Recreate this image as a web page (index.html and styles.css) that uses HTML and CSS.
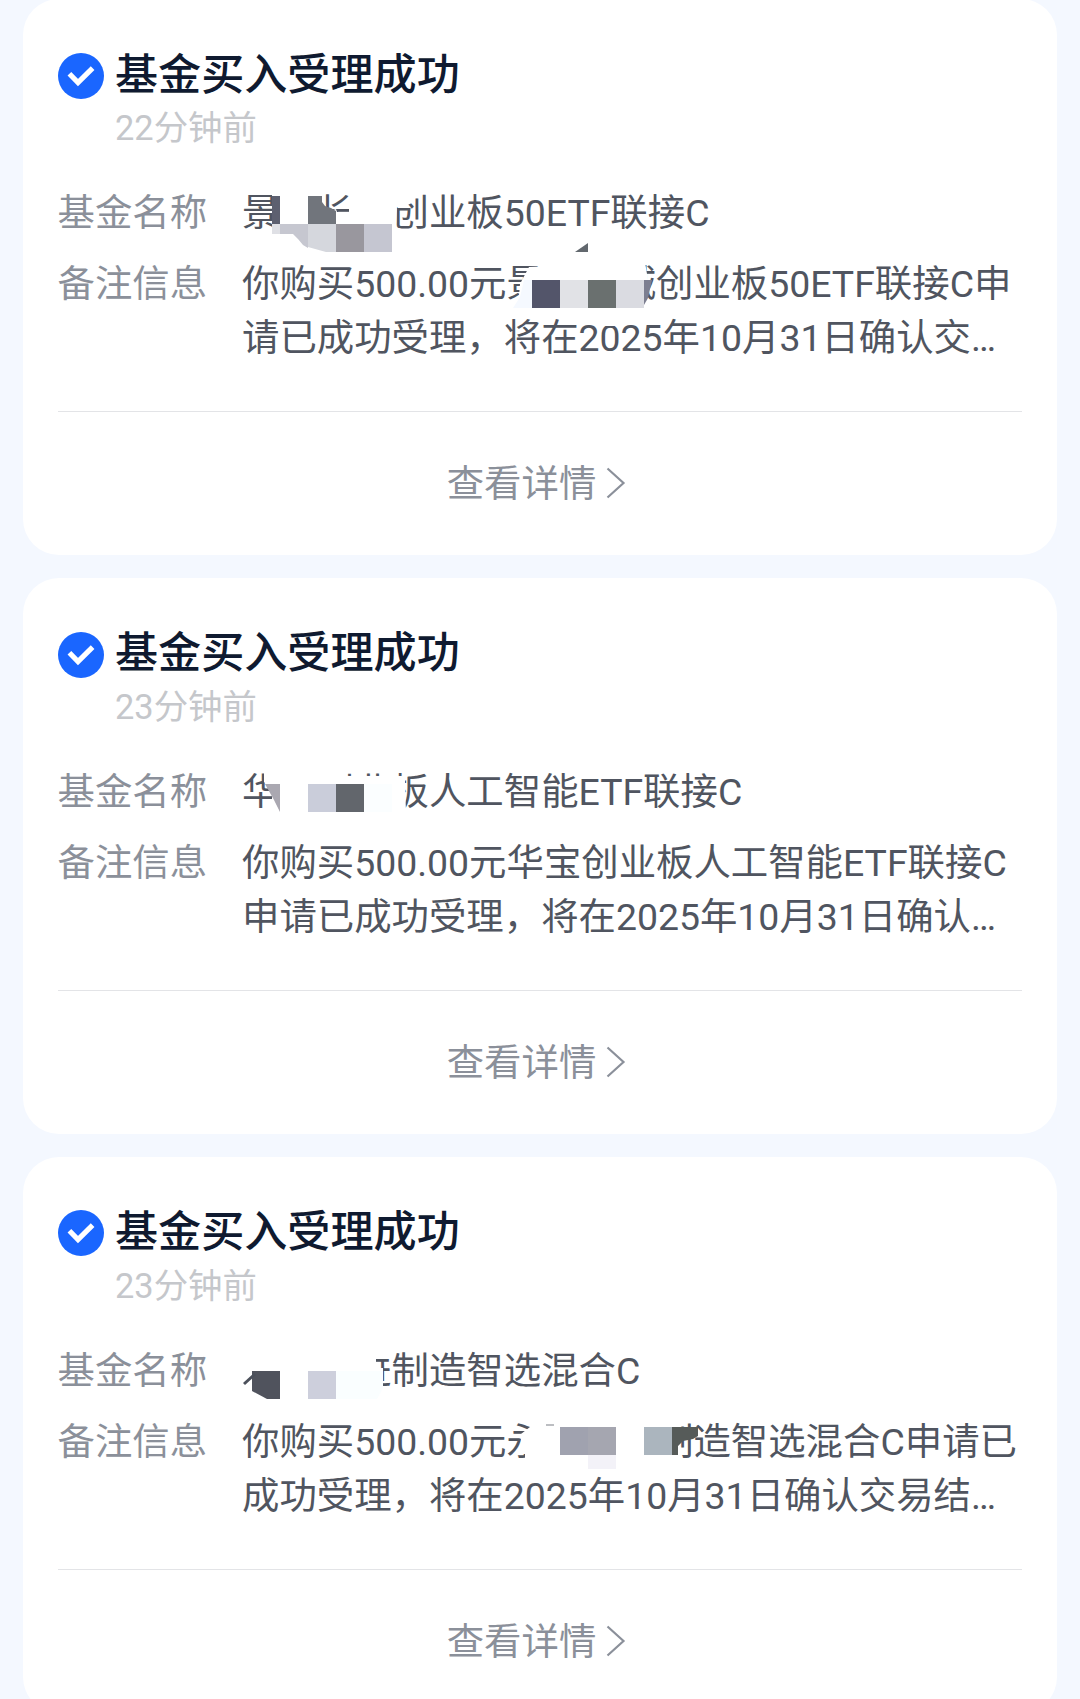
FILE: index.html
```html
<!DOCTYPE html>
<html lang="zh-CN">
<head>
<meta charset="utf-8">
<title>基金买入受理成功</title>
<link rel="stylesheet" href="styles.css">
</head>
<body>
<svg width="0" height="0" class="defs">
  <symbol id="check" viewBox="0 0 46 46"><circle cx="23" cy="23" r="23" fill="#1a66ff"/><path d="M11.4 20.8 20 29.6 34.6 15.2" fill="none" stroke="#fff" stroke-width="5.2"/></symbol>
  <symbol id="chevron" viewBox="0 0 20 32"><path d="M1.5 1.5 17.5 16 1.5 30.5" fill="none" stroke="#8b909a" stroke-width="2.2"/></symbol>
</svg>
<main class="feed">
  <article class="card">
    <header class="head">
      <svg class="check"><use href="#check"/></svg>
      <h2 class="title">基金买入受理成功</h2>
      <time class="time">22分钟前</time>
    </header>
    <dl class="rows">
      <dt>基金名称</dt><dd>景　长　创业板50ETF联接C</dd>
      <dt>备注信息</dt><dd>你购买500.00元景　　城创业板50ETF联接C申<br>请已成功受理，将在2025年10月31日确认交<span class="dots">…</span></dd>
    </dl>
    <a class="more">查看详情<svg class="chevron"><use href="#chevron"/></svg></a>
    <svg class="mosaic" viewBox="23 -1 1034 556">
      <path fill="#fff" d="M272 190H322V202L330 211 336 209 337 212H349V190H412V203L403 207 397 207 396 225H272Z"/>
      <path fill="#5d6070" d="M272 196h8v28h-8z"/>
      <path fill="#71757c" d="M308 196h14v6l3 4 6 2 5 3v13h-28z"/>
      <path fill="#dfe0e5" d="M272 224h8v10h-8z"/>
      <path fill="#c6c7d0" d="M280 224h28v24l-5-3-5-6-5-5h-13z"/>
      <path fill="#d5d7dd" d="M308 224h28v28h-10l-18-5z"/>
      <path fill="#99979e" d="M336 224h28v28h-28z"/>
      <path fill="#c5c6d1" d="M364 224h28v28h-28z"/>
      <path fill="#62686e" d="m575 252 13-9v9z"/>
      <path fill="#fff" d="M529 267 645 262 648 280 645 310H510L519 296 520 284Z"/>
      <path fill="#f5f9ff" d="M524 280h8v28h-19l7-11z"/>
      <path fill="#53556a" d="M532 280h28v28h-28z"/>
      <path fill="#e1e2e6" d="M560 280h28v28h-28z"/>
      <path fill="#6a706f" d="M588 280h28v28h-28z"/>
      <path fill="#dadbe1" d="M616 280h28v28h-28z"/>
      <path fill="#7c7e90" d="M644 280h8l-4 18-4 7z"/>
      <path fill="#fff" d="M600 320h18v6h-18z"/>
    </svg>
  </article>

  <article class="card">
    <header class="head">
      <svg class="check"><use href="#check"/></svg>
      <h2 class="title">基金买入受理成功</h2>
      <time class="time">23分钟前</time>
    </header>
    <dl class="rows">
      <dt>基金名称</dt><dd>华宝创业板人工智能ETF联接C</dd>
      <dt>备注信息</dt><dd>你购买500.00元华宝创业板人工智能ETF联接C<br>申请已成功受理，将在2025年10月31日确认<span class="dots">…</span></dd>
    </dl>
    <a class="more">查看详情<svg class="chevron"><use href="#chevron"/></svg></a>
    <svg class="mosaic" viewBox="23 578 1034 556">
      <path fill="#fff" d="M264 770H345V776H405V782L406 813H280L272 799V791L264 782Z"/>
      <path fill="#aaa8b1" d="M265 784h15v28l-6-12z"/>
      <path fill="#cacdda" d="M308 784h28v28h-28z"/>
      <path fill="#62666c" d="M336 784h28v28h-28z"/>
      <path fill="#fbfeff" d="M364 784h28v28h-28z"/>
    </svg>
  </article>

  <article class="card">
    <header class="head">
      <svg class="check"><use href="#check"/></svg>
      <h2 class="title">基金买入受理成功</h2>
      <time class="time">23分钟前</time>
    </header>
    <dl class="rows">
      <dt>基金名称</dt><dd>　　　进制造智选混合C</dd>
      <dt>备注信息</dt><dd>你购买500.00元永　　　制造智选混合C申请已<br>成功受理，将在2025年10月31日确认交易结<span class="dots">…</span></dd>
    </dl>
    <a class="more">查看详情<svg class="chevron"><use href="#chevron"/></svg></a>
    <svg class="mosaic" viewBox="23 1157 1034 556">
      <path fill="#fff" d="M350 1350H393V1359H376V1368H383V1390H350Z"/>
      <path fill="#50535d" d="M252 1371h28v28h-13l-15-8z"/>
      <path fill="none" stroke="#4b505b" stroke-width="3" d="m244 1384 11-10"/>
      <path fill="#cdcfdc" d="M308 1371h28v28h-28z"/>
      <path fill="#fafeff" d="M336 1371h47v17l-6 11h-41z"/>
      <path fill="#fff" d="M530 1420H679V1460H525V1454H521V1434L530 1427Z"/>
      <path fill="#bcbec2" d="M546 1424h8v2h-8z"/>
      <path fill="#a0a2af" d="M560 1427h28v28h-28z"/>
      <path fill="#a5a6b0" d="M588 1427h28v28h-28z"/>
      <path fill="#f3f2f8" d="M588 1455h28v14h-28z"/>
      <path fill="#abb5be" d="M644 1427h28v28h-28z"/>
      <path fill="#565b59" d="M672 1427h26v9l-5 3-10 2-5 5v9h-6z"/>
    </svg>
  </article>
</main>
</body>
</html>
```
FILE: styles.css
```css
* { box-sizing: border-box; }

body {
  margin: 0;
  height: 1699px;
  overflow: hidden;
  background: #f4f8ff;
  font-family: Roboto, "Noto Sans CJK SC", sans-serif;
}

.defs { display: block; }

.feed {
  display: flex;
  flex-direction: column;
  gap: 23px;
  margin: -1px 23px 0;
}

.card {
  position: relative;
  flex: none;
  height: 556px;
  padding: 46px 35px 0;
  background: #fff;
  border-radius: 36px;
}

.head {
  display: grid;
  grid-template-columns: 46px 1fr;
  grid-template-rows: 60px 46px;
  column-gap: 11px;
  align-items: center;
}

.check { width: 46px; height: 46px; margin-top: 2px; }
.card:last-child .check { margin-top: 0; }

.title {
  margin: 0;
  font-size: 43.1px;
  line-height: 60px;
  font-weight: 500;
  color: #0f1a30;
}

.card:first-child .title { padding-top: 1px; line-height: 61px; }

.time {
  grid-column: 2;
  font-size: 34.4px;
  line-height: 46px;
  color: #c5c7cb;
}

.rows {
  display: grid;
  grid-template-columns: 184px 1fr;
  row-gap: 17px;
  margin: 35px 0 46px;
  font-size: 37.4px;
  line-height: 54px;
  white-space: nowrap;
}

dt { margin-left: -0.5px; color: #8b909a; }
dd { margin: 0; color: #505560; }

.more {
  display: flex;
  align-items: center;
  justify-content: center;
  gap: 10px;
  height: 144px;
  padding: 0 7px 5px 0;
  border-top: 1px solid #e3e4e7;
  font-size: 37.4px;
  color: #8b909a;
}

.chevron { width: 20px; height: 32px; margin-top: 3px; }

.mosaic {
  position: absolute;
  inset: 0;
  width: 1034px;
  height: 556px;
  pointer-events: none;
}
```
